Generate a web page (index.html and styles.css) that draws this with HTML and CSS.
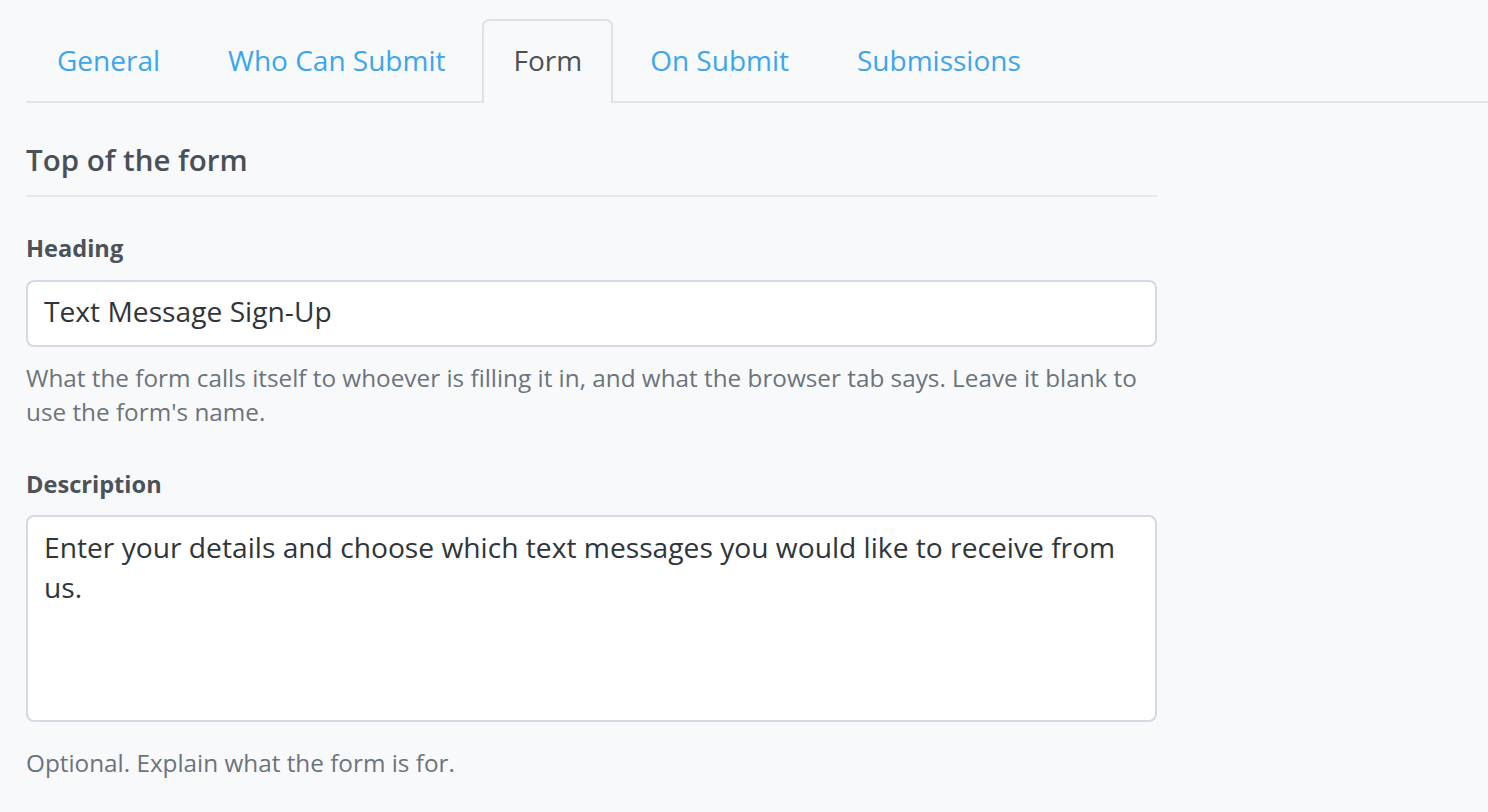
FILE: index.html
```html
<!DOCTYPE html>
<html lang="en">
<head>
<meta charset="utf-8">
<title>Form settings</title>
<link rel="stylesheet" href="styles.css">
</head>
<body>
<div class="page">
  <nav class="tabs">
    <a class="tab" href="#">General</a>
    <a class="tab" href="#">Who Can Submit</a>
    <a class="tab active" href="#">Form</a>
    <a class="tab" href="#">On Submit</a>
    <a class="tab" href="#">Submissions</a>
  </nav>
  <main class="content">
    <h2 class="section-title">Top of the form</h2>
    <div class="field field-first">
      <label class="label" for="heading">Heading</label>
      <input class="input" id="heading" type="text" value="Text Message Sign-Up">
      <p class="help">What the form calls itself to whoever is filling it in, and what the browser tab says. Leave it blank to use the form's name.</p>
    </div>
    <div class="field">
      <label class="label" for="description">Description</label>
      <textarea class="input textarea" id="description">Enter your details and choose which text messages you would like to receive from us.</textarea>
      <p class="help help-after-textarea">Optional. Explain what the form is for.</p>
    </div>
  </main>
</div>
</body>
</html>
```
FILE: styles.css
```css
html, body {
  margin: 0;
  padding: 0;
  background: #f8f9fb;
}
body {
  font-family: "Open Sans", "Noto Sans", sans-serif;
  color: #4a5056;
}
.page {
  padding: 19px 0 0 26px;
}
.tabs {
  display: flex;
  gap: 6px;
  border-bottom: 2px solid #e1e4e8;
}
.tab {
  display: block;
  padding: 20px 29px 24px;
  margin-bottom: -2px;
  border: 2px solid transparent;
  border-bottom: 0;
  border-radius: 7px 7px 0 0;
  font-size: 28px;
  line-height: 38px;
  color: #3aa6ef;
  text-decoration: none;
}
.tab.active {
  color: #4e5154;
  background: #f8f9fb;
  border-color: #dfe2e6;
}
.content {
  width: 1131px;
}
.section-title {
  margin: 37px 0 0;
  padding-bottom: 15px;
  border-bottom: 2px solid #e6e8eb;
  font-size: 29.5px;
  line-height: 40px;
  font-weight: 600;
  color: #4a5056;
}
.field {
  display: flex;
  flex-direction: column;
  margin-top: 38px;
}
.field-first {
  margin-top: 34px;
}
.label {
  font-size: 23.6px;
  line-height: 34px;
  font-weight: 700;
  color: #4b5258;
}
.input {
  box-sizing: border-box;
  width: 100%;
  height: 67px;
  margin: 15px 0 0;
  padding: 9px 16px 14px;
  border: 2px solid #d6d9e3;
  border-radius: 8px;
  background: #ffffff;
  font-family: "Open Sans", "Noto Sans", sans-serif;
  font-size: 28.2px;
  line-height: 40px;
  color: #2f353a;
  outline: none;
}
.textarea {
  display: block;
  height: 207px;
  margin-top: 14px;
  padding-top: 10px;
  resize: none;
}
.help {
  margin: 14px 0 0;
  font-size: 24.3px;
  line-height: 34px;
  color: #6c747b;
}
.help-after-textarea {
  margin-top: 24px;
}
```
